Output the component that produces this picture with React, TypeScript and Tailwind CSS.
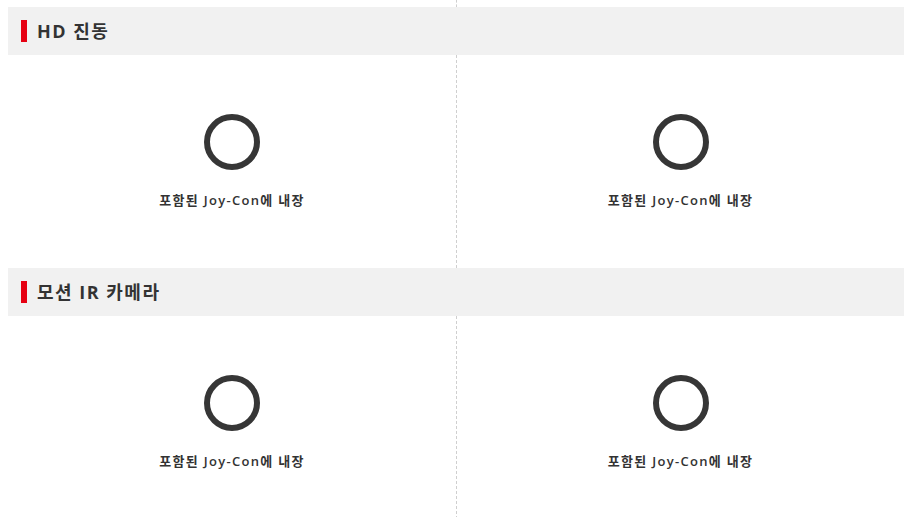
import React from "react";

const FONT = { fontFamily: '"Open Sans", "Noto Sans CJK KR", sans-serif' };

interface Section {
  title: string;
  items: string[];
}

const sections: Section[] = [
  { title: "HD 진동", items: ["포함된 Joy-Con에 내장", "포함된 Joy-Con에 내장"] },
  { title: "모션 IR 카메라", items: ["포함된 Joy-Con에 내장", "포함된 Joy-Con에 내장"] },
];

// Ring icon used for "included" marks
const Ring = () => (
  <svg width="56" height="56" viewBox="0 0 56 56">
    <circle cx="28" cy="28" r="25" fill="none" stroke="#363636" strokeWidth="6" />
  </svg>
);

const SpecCell = ({ label, divider }: { label: string; divider?: boolean }) => (
  <div
    className={`flex flex-col items-center pt-[59px] pb-[58px] ${
      divider ? "border-l border-dashed border-[#cfcfcf]" : ""
    }`}
  >
    <Ring />
    <p className="mt-[20px] text-[13px] leading-[20px] font-semibold tracking-[1.3px] text-[#333]">
      {label}
    </p>
  </div>
);

export default function App() {
  return (
    <div className="bg-white min-h-screen" style={FONT}>
      <div className="ml-2 w-[896px]">
        {/* spacer above first header, keeps the column divider */}
        <div className="grid grid-cols-2 h-[7px]">
          <div />
          <div className="border-l border-dashed border-[#cfcfcf]" />
        </div>

        {sections.map((s) => (
          <div key={s.title}>
            <div className="flex items-center h-12 bg-[#f1f1f1] pl-[13px]">
              <span className="w-[6px] h-[22px] bg-[#e60012]" />
              <h2 className="ml-[10px] text-[18px] font-bold tracking-[1.5px] text-[#333] leading-none">
                {s.title}
              </h2>
            </div>
            <div className="grid grid-cols-2">
              {s.items.map((it, i) => (
                <SpecCell key={i} label={it} divider={i === 1} />
              ))}
            </div>
          </div>
        ))}
      </div>
    </div>
  );
}
